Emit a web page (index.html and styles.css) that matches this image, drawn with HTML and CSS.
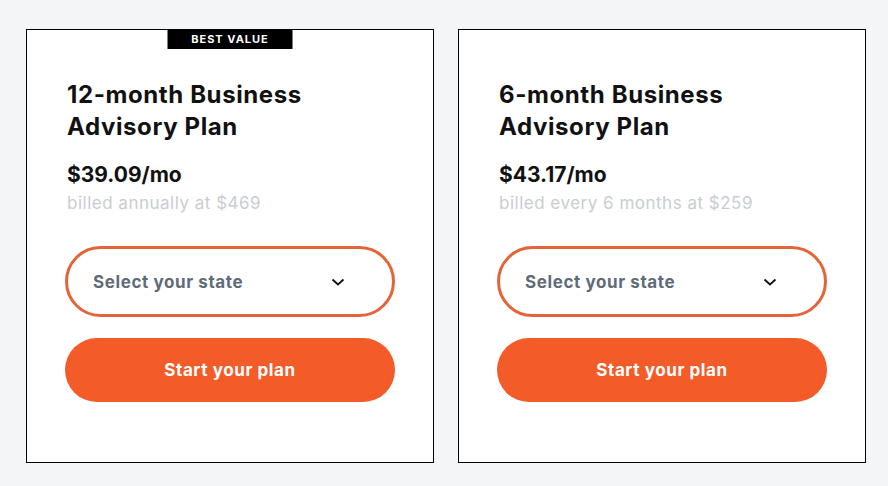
FILE: index.html
```html
<!DOCTYPE html>
<html lang="en">

<head>
    <meta charset="UTF-8">
    <meta name="viewport" content="width=device-width, initial-scale=1.0">
    <title>Business Advisory Plans</title>
    <link rel="stylesheet" href="styles.css">
</head>

<body>
    <div class="plans">
        <!-- 12 month plan -->
        <div class="plan-card">
            <div class="badge">BEST VALUE</div>
            <h2 class="plan-title">12-month Business Advisory Plan</h2>
            <div class="plan-price">$39.09/mo</div>
            <div class="plan-billing">billed annually at $469</div>
            <div class="state-select">
                <span>Select your state</span>
                <svg class="chevron" width="14" height="8" viewBox="0 0 14 8">
                    <path d="M1.5,1.5 L7,6.5 L12.5,1.5" fill="none" stroke="#111" stroke-width="1.8" />
                </svg>
            </div>
            <button class="start-btn">Start your plan</button>
        </div>

        <!-- 6 month plan -->
        <div class="plan-card">
            <h2 class="plan-title">6-month Business Advisory Plan</h2>
            <div class="plan-price">$43.17/mo</div>
            <div class="plan-billing">billed every 6 months at $259</div>
            <div class="state-select">
                <span>Select your state</span>
                <svg class="chevron" width="14" height="8" viewBox="0 0 14 8">
                    <path d="M1.5,1.5 L7,6.5 L12.5,1.5" fill="none" stroke="#111" stroke-width="1.8" />
                </svg>
            </div>
            <button class="start-btn">Start your plan</button>
        </div>
    </div>
</body>

</html>
```

FILE: styles.css
```css
body {
    margin: 0;
    background-color: #f4f5f7;
    font-family: "Inter", "Noto Sans", sans-serif;
}

.plans {
    display: flex;
    gap: 24px;
    padding: 29px 0 0 26px;
}

.plan-card {
    position: relative;
    box-sizing: border-box;
    width: 408px;
    height: 434px;
    padding: 49px 38px 0 38px;
    background-color: #fff;
    border: 1px solid #000;
}

.badge {
    position: absolute;
    top: 0;
    left: 50%;
    transform: translateX(-50%);
    width: 125px;
    height: 19px;
    background-color: #000;
    color: #fff;
    font-size: 11px;
    font-weight: 700;
    letter-spacing: 1px;
    line-height: 19px;
    text-align: center;
}

.plan-title {
    margin: 0 0 0 2px;
    width: 280px;
    font-size: 24px;
    font-weight: 700;
    line-height: 32px;
    letter-spacing: 0.6px;
    color: #111;
}

.plan-price {
    margin: 19px 0 0 2px;
    font-size: 21px;
    font-weight: 700;
    line-height: 26px;
    color: #111;
}

.plan-billing {
    margin: 2px 0 0 2px;
    font-size: 17px;
    line-height: 26px;
    letter-spacing: 0.5px;
    color: #c9cdd3;
}

.state-select {
    display: flex;
    align-items: center;
    justify-content: space-between;
    box-sizing: border-box;
    height: 71px;
    margin-top: 30px;
    padding: 0 47px 0 25px;
    border: 3px solid #e4643a;
    border-radius: 36px;
    font-size: 17px;
    font-weight: 700;
    letter-spacing: 0.6px;
    color: #5f6b78;
}

.start-btn {
    display: block;
    width: 100%;
    height: 64px;
    margin-top: 21px;
    border: none;
    border-radius: 32px;
    background-color: #f35b28;
    color: #fff;
    font-family: inherit;
    font-size: 17px;
    font-weight: 700;
    letter-spacing: 0.6px;
    cursor: pointer;
}
```
